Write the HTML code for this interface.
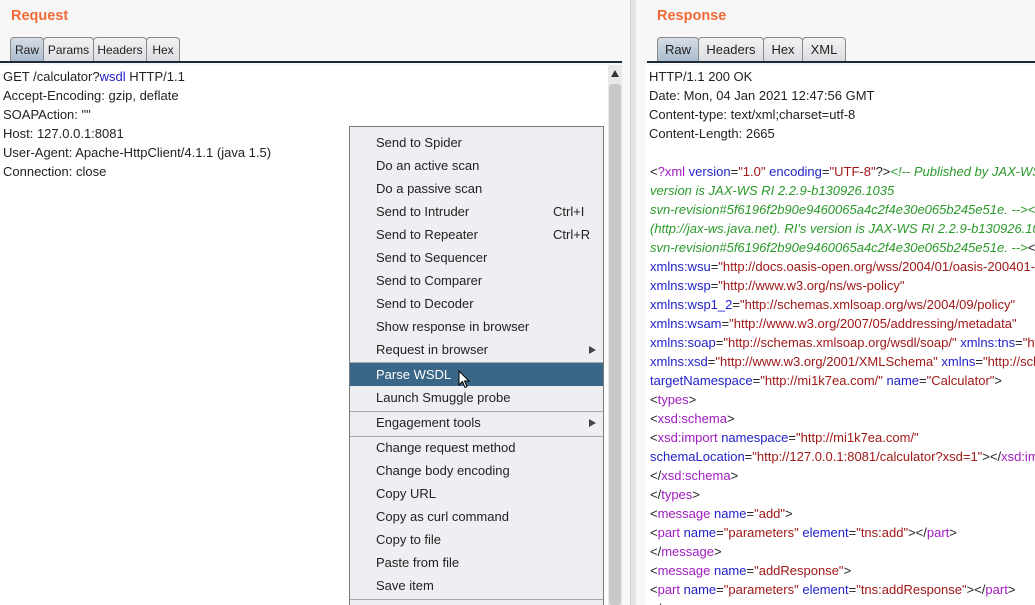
<!DOCTYPE html>
<html><head><style>
html,body{margin:0;width:1035px;height:605px;overflow:hidden}
body{background:#f7f7f7;font-family:"Liberation Sans",sans-serif;font-size:13px;position:relative;color:#222}
.abs{position:absolute}
.title{color:#f26a38;font-weight:bold;font-size:14.5px}
.tab{position:absolute;top:37px;height:24px;border:1px solid #8a8a8a;border-bottom:none;border-radius:4px 4px 0 0;background:linear-gradient(#f2f2f2,#dcdde2);box-sizing:border-box;text-align:center;line-height:24px;font-size:12px}
.tab.r{font-size:13px}
.tab.sel{background:linear-gradient(#d6dde6,#a9bccd)}
.line{position:absolute;height:2px;background:#1c2a3a}
.content{position:absolute;background:#fff;top:65px;bottom:0}
.l{position:absolute;white-space:nowrap;left:3px}
.t{color:#a01cc0}.a{color:#2222c8}.v{color:#a01818}.c{color:#2a9a2a;font-style:italic}.k{color:#222}
.menu{position:absolute;left:349px;top:126px;width:255px;height:479px;background:#eeeff2;border:1px solid #7a7a7a;border-bottom:none;box-sizing:border-box;overflow:hidden}
.mi{position:absolute;left:26px;white-space:nowrap;font-size:13px}
.sc{position:absolute;left:203px}
.sep{position:absolute;left:0;right:0;height:1px;background:#a8a8a8}
.arr{position:absolute;left:239px;width:0;height:0;border-left:7px solid #444;border-top:4px solid transparent;border-bottom:4px solid transparent}
</style></head><body>
<div class="abs title" style="left:11px;top:8px">Request</div>
<div class="tab sel" style="left:10px;width:34px">Raw</div>
<div class="tab" style="left:43px;width:51px">Params</div>
<div class="tab" style="left:93px;width:54px">Headers</div>
<div class="tab" style="left:146px;width:34px">Hex</div>
<div class="line" style="left:0;width:622px;top:61px"></div>
<div class="content" style="left:0;width:608px"></div>
<div class="abs" style="left:608px;top:65px;width:14px;height:540px;background:#e8e8e8"></div>
<div class="abs" style="left:609px;top:84px;width:12px;height:521px;background:#c9c9c9;border-radius:3px"></div>
<div class="abs" style="left:611px;top:70px;width:0;height:0;border-bottom:7px solid #333;border-left:4px solid transparent;border-right:4px solid transparent"></div>
<div class="abs" style="left:630px;top:0;width:5px;height:605px;background:#e4e4e4;border-left:1px solid #d0d0d0"></div>
<div class="l" style="top:69px">GET /calculator?<span style="color:#2222c8">wsdl</span> HTTP/1.1</div>
<div class="l" style="top:88px">Accept-Encoding: gzip, deflate</div>
<div class="l" style="top:107px">SOAPAction: ""</div>
<div class="l" style="top:126px">Host: 127.0.0.1:8081</div>
<div class="l" style="top:145px">User-Agent: Apache-HttpClient/4.1.1 (java 1.5)</div>
<div class="l" style="top:164px">Connection: close</div>

<div class="abs title" style="left:657px;top:8px">Response</div>
<div class="tab sel r" style="left:657px;width:42px">Raw</div>
<div class="tab r" style="left:698px;width:66px">Headers</div>
<div class="tab r" style="left:763px;width:40px">Hex</div>
<div class="tab r" style="left:802px;width:44px">XML</div>
<div class="line" style="left:647px;width:388px;top:61px"></div>
<div class="content" style="left:645px;width:390px;overflow:hidden">
<div class="l" style="top:4px;left:4px">HTTP/1.1 200 OK</div>
<div class="l" style="top:23px;left:4px">Date: Mon, 04 Jan 2021 12:47:56 GMT</div>
<div class="l" style="top:42px;left:4px">Content-type: text/xml;charset=utf-8</div>
<div class="l" style="top:61px;left:4px">Content-Length: 2665</div>
<div class="l" style="top:99px;left:5px"><span class="k">&lt;</span><span class="t">?xml</span> <span class="a">version</span>=<span class="v">"1.0"</span> <span class="a">encoding</span>=<span class="v">"UTF-8"</span>?&gt;<span class="c">&lt;!-- Published by JAX-WS RI</span></div>
<div class="l c" style="top:118px;left:5px">version is JAX-WS RI 2.2.9-b130926.1035</div>
<div class="l c" style="top:137px;left:5px">svn-revision#5f6196f2b90e9460065a4c2f4e30e065b245e51e. --&gt;&lt;!-- Generated</div>
<div class="l c" style="top:156px;left:5px">(http://jax-ws.java.net). RI's version is JAX-WS RI 2.2.9-b130926.1035</div>
<div class="l" style="top:175px;left:5px"><span class="c">svn-revision#5f6196f2b90e9460065a4c2f4e30e065b245e51e. --&gt;</span>&lt;<span class="t">definitions</span></div>
<div class="l" style="top:194px;left:5px"><span class="a">xmlns:wsu</span>=<span class="v">"http://docs.oasis-open.org/wss/2004/01/oasis-200401-wss"</span></div>
<div class="l" style="top:213px;left:5px"><span class="a">xmlns:wsp</span>=<span class="v">"http://www.w3.org/ns/ws-policy"</span></div>
<div class="l" style="top:232px;left:5px"><span class="a">xmlns:wsp1_2</span>=<span class="v">"http://schemas.xmlsoap.org/ws/2004/09/policy"</span></div>
<div class="l" style="top:251px;left:5px"><span class="a">xmlns:wsam</span>=<span class="v">"http://www.w3.org/2007/05/addressing/metadata"</span></div>
<div class="l" style="top:270px;left:5px"><span class="a">xmlns:soap</span>=<span class="v">"http://schemas.xmlsoap.org/wsdl/soap/"</span> <span class="a">xmlns:tns</span>=<span class="v">"http</span></div>
<div class="l" style="top:289px;left:5px"><span class="a">xmlns:xsd</span>=<span class="v">"http://www.w3.org/2001/XMLSchema"</span> <span class="a">xmlns</span>=<span class="v">"http://sche</span></div>
<div class="l" style="top:308px;left:5px"><span class="a">targetNamespace</span>=<span class="v">"http://mi1k7ea.com/"</span> <span class="a">name</span>=<span class="v">"Calculator"</span>&gt;</div>
<div class="l" style="top:327px;left:5px">&lt;<span class="t">types</span>&gt;</div>
<div class="l" style="top:346px;left:5px">&lt;<span class="t">xsd:schema</span>&gt;</div>
<div class="l" style="top:365px;left:5px">&lt;<span class="t">xsd:import</span> <span class="a">namespace</span>=<span class="v">"http://mi1k7ea.com/"</span></div>
<div class="l" style="top:384px;left:5px"><span class="a">schemaLocation</span>=<span class="v">"http://127.0.0.1:8081/calculator?xsd=1"</span>&gt;&lt;/<span class="t">xsd:import</span>&gt;</div>
<div class="l" style="top:403px;left:5px">&lt;/<span class="t">xsd:schema</span>&gt;</div>
<div class="l" style="top:422px;left:5px">&lt;/<span class="t">types</span>&gt;</div>
<div class="l" style="top:441px;left:5px">&lt;<span class="t">message</span> <span class="a">name</span>=<span class="v">"add"</span>&gt;</div>
<div class="l" style="top:460px;left:5px">&lt;<span class="t">part</span> <span class="a">name</span>=<span class="v">"parameters"</span> <span class="a">element</span>=<span class="v">"tns:add"</span>&gt;&lt;/<span class="t">part</span>&gt;</div>
<div class="l" style="top:479px;left:5px">&lt;/<span class="t">message</span>&gt;</div>
<div class="l" style="top:498px;left:5px">&lt;<span class="t">message</span> <span class="a">name</span>=<span class="v">"addResponse"</span>&gt;</div>
<div class="l" style="top:517px;left:5px">&lt;<span class="t">part</span> <span class="a">name</span>=<span class="v">"parameters"</span> <span class="a">element</span>=<span class="v">"tns:addResponse"</span>&gt;&lt;/<span class="t">part</span>&gt;</div>
<div class="l" style="top:536px;left:5px">&lt;/</div>
</div>

<div class="menu">
<div class="mi" style="top:8px">Send to Spider</div>
<div class="mi" style="top:31px">Do an active scan</div>
<div class="mi" style="top:54px">Do a passive scan</div>
<div class="mi" style="top:77px">Send to Intruder</div><div class="mi sc" style="top:77px">Ctrl+I</div>
<div class="mi" style="top:100px">Send to Repeater</div><div class="mi sc" style="top:100px">Ctrl+R</div>
<div class="mi" style="top:123px">Send to Sequencer</div>
<div class="mi" style="top:146px">Send to Comparer</div>
<div class="mi" style="top:169px">Send to Decoder</div>
<div class="mi" style="top:192px">Show response in browser</div>
<div class="mi" style="top:215px">Request in browser</div><div class="arr" style="top:219px"></div>
<div class="sep" style="top:235px"></div>
<div class="abs" style="left:0;right:0;top:236px;height:23px;background:#3a6788"></div>
<div class="mi" style="top:240px;color:#fff">Parse WSDL</div>
<svg class="abs" style="left:108px;top:243px" width="14" height="20" viewBox="0 0 14 20"><path d="M1 1 L1 15 L4.5 11.5 L7 17.5 L9 16.5 L6.5 11 L11 11 Z" fill="#fff" stroke="#000" stroke-width="1"/></svg>
<div class="mi" style="top:263px">Launch Smuggle probe</div>
<div class="sep" style="top:284px"></div>
<div class="mi" style="top:288px">Engagement tools</div><div class="arr" style="top:292px"></div>
<div class="sep" style="top:309px"></div>
<div class="mi" style="top:313px">Change request method</div>
<div class="mi" style="top:336px">Change body encoding</div>
<div class="mi" style="top:359px">Copy URL</div>
<div class="mi" style="top:382px">Copy as curl command</div>
<div class="mi" style="top:405px">Copy to file</div>
<div class="mi" style="top:428px">Paste from file</div>
<div class="mi" style="top:451px">Save item</div>
<div class="sep" style="top:472px"></div>
</div>
</body></html>
